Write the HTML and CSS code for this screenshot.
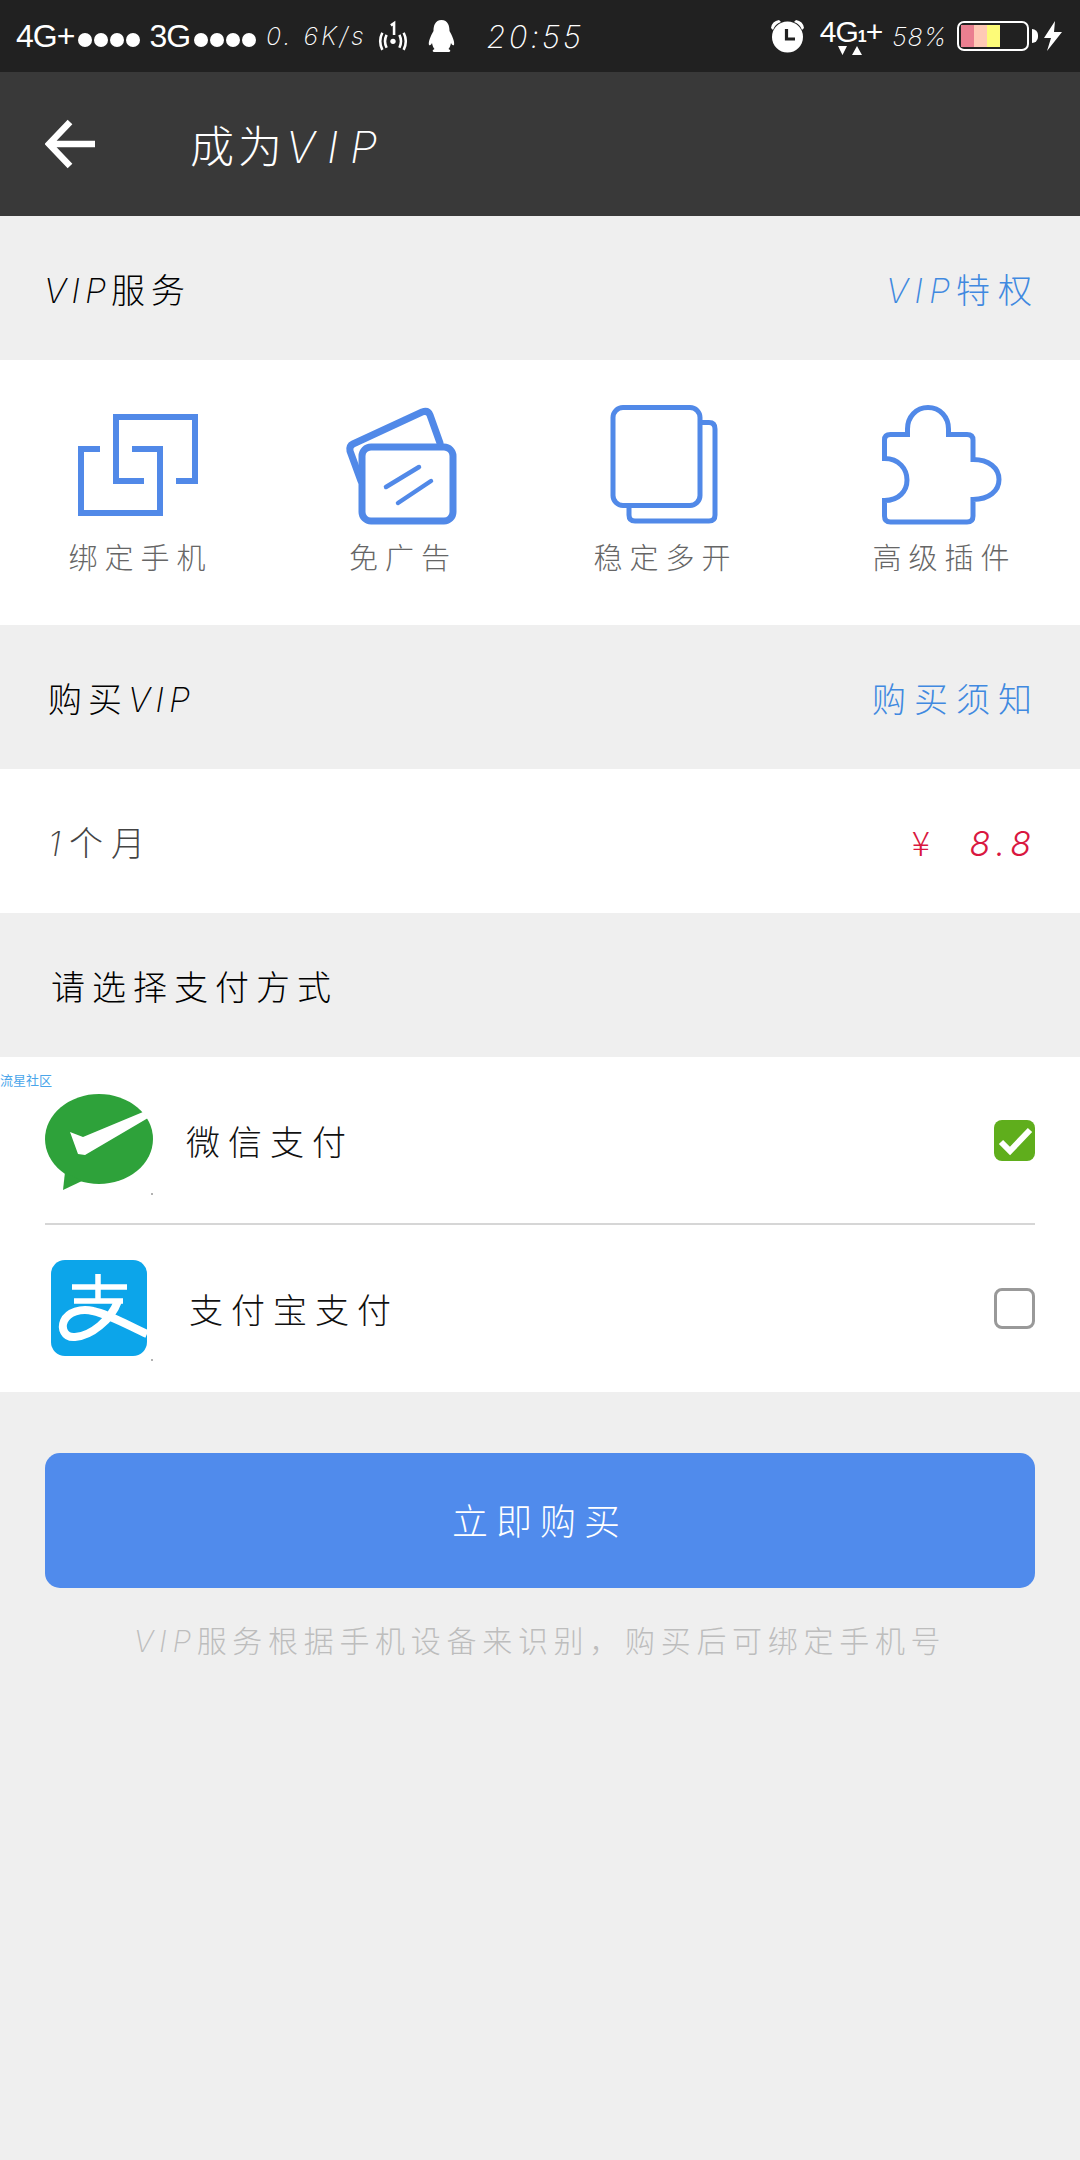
FILE: index.html
```html
<!DOCTYPE html>
<html lang="zh">

<head>
    <meta charset="utf-8">
    <title>成为VIP</title>
    <link rel="stylesheet" href="styles.css">
</head>

<body>
    <div class="status-bar">
        <div class="status-left">
            <span class="net">4G+</span>
            <span class="dots"><i></i><i></i><i></i><i></i></span>
            <span class="net net-3g">3G</span>
            <span class="dots"><i></i><i></i><i></i><i></i></span>
            <span class="speed">0. 6K/s</span>
            <svg class="ic-hotspot" width="32" height="32" viewBox="0 0 28 30">
                <circle cx="14" cy="20" r="2.5" fill="#fff" />
                <path d="M8 14 Q5 20 8 26 M20 14 Q23 20 20 26 M4 12 Q0 20 4 28 M24 12 Q28 20 24 28" fill="none" stroke="#fff" stroke-width="2.4" />
                <path d="M12 5 L15 3 V14" fill="none" stroke="#fff" stroke-width="2.4" />
            </svg>
            <svg class="ic-qq" width="27" height="34" viewBox="0 0 27 34">
                <path d="M13.5 1 C20 1 21.5 7 21.5 12 C24 16 27 23 26 26 C25 27 23.5 25.5 23 24 C22.5 27 21.5 29 20.5 30 C23 31 23 33 20 33 H7 C4 33 4 31 6.500 30 C5.500 29 4.500 27 4 24 C3.500 25.500 2 27 1 26 C0 23 3 16 5.500 12 C5.500 7 7 1 13.500 1 Z" fill="#fff" />
            </svg>
            <span class="clock">20:55</span>
        </div>
        <div class="status-right">
            <svg class="ic-alarm" width="35" height="34" viewBox="0 0 35 34">
                <path d="M1 9 Q2 2 9 1 L11 3 Q5 5 3 11 Z M34 9 Q33 2 26 1 L24 3 Q30 5 32 11 Z" fill="#fff" />
                <circle cx="17.500" cy="18" r="15.500" fill="#fff" />
                <path d="M16.500 10 V20 H25" fill="none" stroke="#212121" stroke-width="3.200" />
            </svg>
            <div class="net-main">
                <span class="net">4G<sub>1</sub>+</span>
                <svg class="ic-arrows" width="26" height="10" viewBox="0 0 26 10">
                    <path d="M0 0 H9 L4.500 9 Z M14 9 L19 0 L24 9 Z" fill="#fff" />
                </svg>
            </div>
            <span class="percent">58%</span>
            <div class="battery">
                <div class="battery-cell">
                    <i class="seg-a"></i><i class="seg-b"></i><i class="seg-c"></i>
                </div>
                <i class="battery-tip"></i>
            </div>
            <svg class="ic-bolt" width="18" height="30" viewBox="0 0 18 30">
                <path d="M11 0 L0 17 H7 L3 30 L18 11 H10 Z" fill="#fff" />
            </svg>
        </div>
    </div>

    <div class="app-bar">
        <svg class="ic-back" width="50" height="50" viewBox="0 0 50 50">
            <path d="M25 3 L4 25 L25 47 M4 25 H50" fill="none" stroke="#fff" stroke-width="6.500" />
        </svg>
        <h1>成为<span class="lat">VIP</span></h1>
    </div>

    <div class="sec-head">
        <span class="sec-title"><span class="lat">VIP</span>服务</span>
        <a class="sec-link"><span class="lat">VIP</span>特权</a>
    </div>

    <div class="features">
        <div class="feature">
            <svg width="120" height="120" viewBox="0 0 120 120" fill="none" stroke="#5189e8" stroke-width="6">
                <path d="M66 76 H38 V12 H117 V76 H98" />
                <path d="M22 44 H3 V108 H82 V44 H54" />
            </svg>
            <span>绑定手机</span>
        </div>
        <div class="feature">
            <svg width="120" height="120" viewBox="0 0 120 120" fill="none" stroke="#5189e8" stroke-width="7" stroke-linecap="round">
                <rect x="18" y="42" width="91" height="74" rx="9" />
                <path d="M96 38 L86 10 Q84 5 78 7 L9 39 Q5 41 6 46 L17 76" />
                <path d="M42 82 L75 62 M54 98 L87 76" stroke-width="4.500" />
            </svg>
            <span>免广告</span>
        </div>
        <div class="feature">
            <svg width="120" height="120" viewBox="0 0 120 120" fill="none" stroke="#5189e8" stroke-width="5">
                <rect x="5" y="2.500" width="87" height="98" rx="10" />
                <path d="M94 17.500 H101 Q107 17.500 107 24 V110 Q107 116 101 116 H27 Q21 116 21 110 V102" />
            </svg>
            <span>稳定多开</span>
        </div>
        <div class="feature">
            <svg width="120" height="120" viewBox="0 0 120 120" fill="none" stroke="#5189e8" stroke-width="5">
                <path d="M2.500 53.500 C17 53.500 25 64 25 75 C25 86 17 95.500 2.500 95.500 V111 Q2.500 117 8.500 117 H85 Q91 117 91 111 V94.500 C107 94.500 117 86 117 74.500 C117 63 107 54.500 91 54.500 V35 Q91 29.500 85 29.500 H66.500 V24 C66.500 12 58 2.500 46 2.500 C34 2.500 25.500 12 25.500 24 V29.500 H8.500 Q2.500 29.500 2.500 35 Z" />
            </svg>
            <span>高级插件</span>
        </div>
    </div>

    <div class="sec-head sec-head-buy">
        <span class="sec-title">购买<span class="lat">VIP</span></span>
        <a class="sec-link">购买须知</a>
    </div>

    <div class="plan-row">
        <span class="plan-name"><span class="lat">1</span>个月</span>
        <span class="plan-price">¥ <span class="lat">8.8</span></span>
    </div>

    <div class="sec-head sec-head-pay">
        <span class="sec-title">请选择支付方式</span>
    </div>

    <div class="pay-list">
        <span class="watermark">流星社区</span>
        <div class="pay-row">
            <svg class="pay-icon pay-icon-wx" width="120" height="110" viewBox="0 0 120 110">
                <ellipse cx="59" cy="49" rx="54" ry="45" fill="#2ea23a" />
                <path d="M25 82 L23 100 L42 91 Z" fill="#2ea23a" />
                <path d="M30 42 L43 47 L103 22 L108 28 L45 65 L38 64 Z" fill="#fff" />
                <circle cx="112" cy="104" r="1" fill="#999" />
            </svg>
            <span class="pay-name">微信支付</span>
            <svg class="pay-check" width="41" height="41" viewBox="0 0 41 41">
                <rect width="41" height="41" rx="8" fill="#5fae1c" />
                <path d="M7 22 L16 31 L36 10" fill="none" stroke="#fff" stroke-width="6" />
            </svg>
        </div>
        <div class="pay-row pay-row-ali">
            <svg class="pay-icon" width="120" height="110" viewBox="0 0 120 110">
                <g transform="translate(11 4)">
                    <rect width="96" height="96" rx="14" fill="#0ca5ea" />
                    <path d="M21 27 H76 M47 14 V41 M23 41 H72" fill="none" stroke="#fff" stroke-width="5.500" />
                    <path d="M67 41 C60 60 40 76 24 77 C13 78 10 68 13 61 C17 52 30 48 42 51 C60 55 80 67 96 74" fill="none" stroke="#fff" stroke-width="8" />
                </g>
                <circle cx="112" cy="104" r="1" fill="#999" />
            </svg>
            <span class="pay-name">支付宝支付</span>
            <span class="pay-box"></span>
        </div>
    </div>

    <button class="buy-btn">立即购买</button>
    <p class="note"><span class="lat">VIP</span>服务根据手机设备来识别，购买后可绑定手机号</p>
</body>

</html>
```

FILE: styles.css
```css
* {
    box-sizing: border-box;
}

body {
    margin: 0;
    width: 1080px;
    height: 2160px;
    background-color: #efefef;
    font-family: "Noto Sans CJK SC", sans-serif;
    font-weight: 300;
}

.lat {
    font-family: Inter, sans-serif;
    font-style: italic;
    font-weight: 200;
}

/* status bar */
.status-bar {
    height: 72px;
    background: #212121;
    color: #fff;
    display: flex;
    align-items: center;
    justify-content: space-between;
    padding: 0 18px 0 16px;
}

.status-left,
.status-right {
    display: flex;
    align-items: center;
}

.net {
    font-family: "Liberation Sans", sans-serif;
    font-size: 32px;
    letter-spacing: -1px;
}

.status-right .net {
    font-size: 30px;
}

.net sub {
    font-size: 16px;
    font-weight: 700;
    vertical-align: baseline;
}

.net-3g {
    margin-left: 9px;
}

.dots {
    display: flex;
    gap: 2px;
    margin: 8px 0 0 4px;
}

.dots i {
    width: 14px;
    height: 14px;
    border-radius: 50%;
    background: #fff;
}

.speed,
.clock,
.percent {
    font-family: Inter, sans-serif;
    font-style: italic;
    font-weight: 200;
}

.speed {
    font-size: 25px;
    letter-spacing: 3px;
    margin-left: 10px;
}

.ic-hotspot {
    margin-left: 10px;
}

.ic-qq {
    margin-left: 19px;
}

.clock {
    font-size: 31px;
    letter-spacing: 3px;
    margin-left: 32px;
}

.ic-alarm {
    margin-right: 15px;
}

.net-main {
    display: flex;
    flex-direction: column;
    align-items: center;
    height: 48px;
    margin-top: 6px;
}

.ic-arrows {
    margin-top: -3px;
}

.percent {
    font-size: 25px;
    letter-spacing: 1px;
    margin: 2px 10px 0 10px;
}

.battery {
    display: flex;
    align-items: center;
    gap: 3px;
    margin-right: 6px;
}

.battery-cell {
    width: 72px;
    height: 30px;
    border: 2px solid #fff;
    border-radius: 7px;
    padding: 2px;
    display: flex;
}

.battery-cell i {
    width: 13px;
}

.seg-a {
    background: #ea7f90;
}

.seg-b {
    background: #ffc9b5;
}

.seg-c {
    background: #fdfb78;
}

.battery-tip {
    width: 6px;
    height: 14px;
    background: #fff;
    border-radius: 0 7px 7px 0;
}

/* app bar */
.app-bar {
    height: 144px;
    background: #393939;
    display: flex;
    align-items: center;
    padding-left: 45px;
}

.app-bar h1 {
    margin: 0 0 0 95px;
    color: #fff;
    font-size: 44px;
    font-weight: 300;
    letter-spacing: 4px;
}

.app-bar .lat {
    letter-spacing: 12px;
}

/* sections */
.sec-head {
    height: 144px;
    display: flex;
    align-items: center;
    justify-content: space-between;
    padding: 0 40px 0 44px;
    font-size: 34px;
}

.sec-head-buy {
    padding-left: 48px;
}

.sec-head-pay {
    padding-left: 51px;
}

.sec-head-pay .sec-title {
    letter-spacing: 7px;
}

.sec-title {
    color: #000;
    letter-spacing: 6px;
}

.sec-title .lat {
    letter-spacing: 5px;
}

.sec-link {
    color: #4089e0;
    letter-spacing: 8px;
}

.sec-link .lat {
    letter-spacing: 6px;
}

.features {
    height: 265px;
    background: #fff;
    display: flex;
    justify-content: space-between;
    padding: 45px 72px 0 68px;
}

.feature {
    display: flex;
    flex-direction: column;
    align-items: center;
    width: 139px;
    color: #666;
    font-size: 29px;
    letter-spacing: 7px;
    line-height: 40px;
    white-space: nowrap;
}

.feature svg {
    margin-bottom: 11px;
}

.feature span {
    padding-left: 6px;
}

.feature:nth-child(2) {
    width: 100px;
}

.feature:nth-child(2) svg {
    margin-left: 8px;
}

.feature:nth-child(3) svg {
    margin-left: 11px;
}

.feature:nth-child(4) {
    width: 133px;
}

.plan-row {
    height: 144px;
    background: #fff;
    display: flex;
    align-items: center;
    justify-content: space-between;
    padding: 0 43px 0 48px;
    font-size: 34px;
}

.plan-name {
    color: #444;
    letter-spacing: 8px;
}

.plan-price {
    color: #d9173f;
    letter-spacing: 6px;
}

.plan-price .lat {
    font-weight: 300;
    margin-left: 20px;
}

/* pay options */
.pay-list {
    position: relative;
    background: #fff;
    padding: 0 45px;
}

.watermark {
    position: absolute;
    left: 0;
    top: 14px;
    font-size: 13px;
    line-height: 18px;
    color: #4aa5ea;
    font-weight: 400;
}

.pay-row {
    height: 168px;
    display: flex;
    align-items: center;
    border-bottom: 2px solid #d6d6d6;
}

.pay-row-ali {
    height: 167px;
    border-bottom: 0;
}

.pay-icon {
    margin-left: -5px;
    margin-top: 4px;
}

.pay-icon-wx {
    margin-top: 9px;
}

.pay-name {
    flex: 1;
    margin-left: 26px;
    color: #111;
    font-size: 34px;
    letter-spacing: 8px;
}

.pay-row-ali .pay-name {
    margin-left: 29px;
}

.pay-box {
    width: 41px;
    height: 41px;
    border: 3px solid #999;
    border-radius: 8px;
}

.buy-btn {
    display: block;
    width: 990px;
    height: 135px;
    margin: 61px 45px 0;
    padding-bottom: 4px;
    border: 0;
    border-radius: 15px;
    background: #508bec;
    color: #fff;
    font-family: inherit;
    font-weight: 300;
    font-size: 36px;
    letter-spacing: 8px;
}

.note {
    margin: 29px 0 0;
    text-align: center;
    color: #bdbdbd;
    font-size: 30px;
    letter-spacing: 5.7px;
}
```
